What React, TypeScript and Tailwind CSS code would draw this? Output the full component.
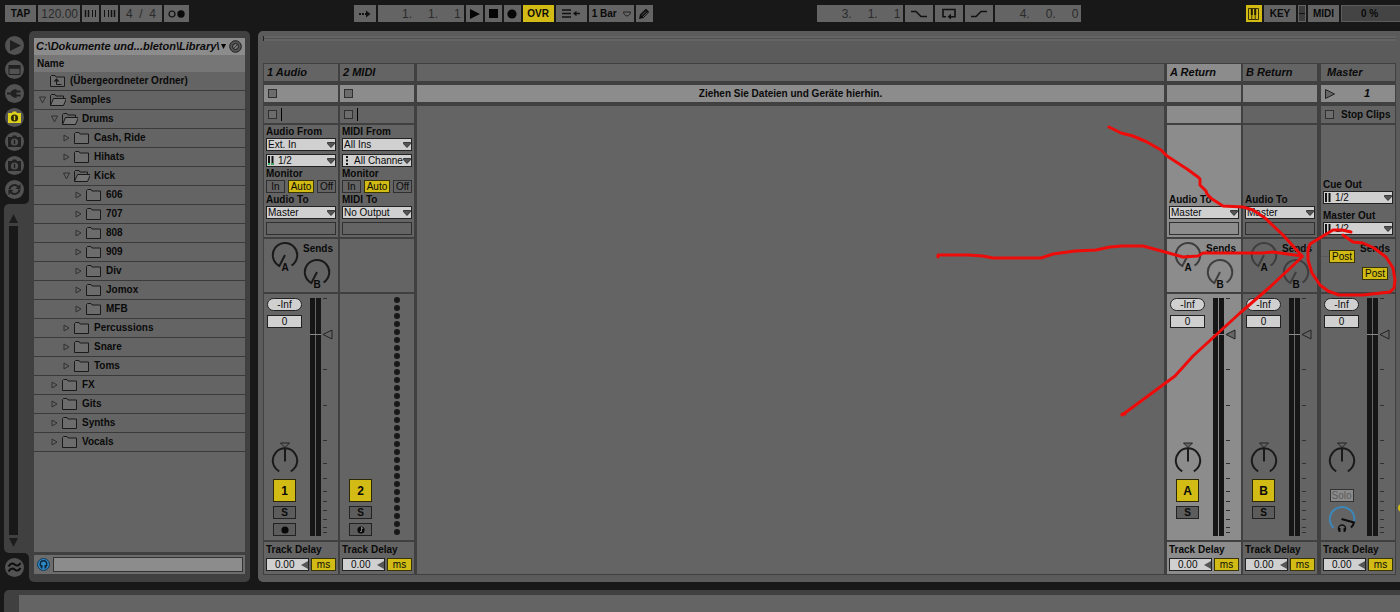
import type { ReactNode } from "react"

/* ---------- data ---------- */

type Node = { name: string; level: 0 | 1 | 2 | 3; state: "open" | "closed" | "parent" }

const tree: Node[] = [
  { name: "(Übergeordneter Ordner)", level: 0, state: "parent" },
  { name: "Samples", level: 0, state: "open" },
  { name: "Drums", level: 1, state: "open" },
  { name: "Cash, Ride", level: 2, state: "closed" },
  { name: "Hihats", level: 2, state: "closed" },
  { name: "Kick", level: 2, state: "open" },
  { name: "606", level: 3, state: "closed" },
  { name: "707", level: 3, state: "closed" },
  { name: "808", level: 3, state: "closed" },
  { name: "909", level: 3, state: "closed" },
  { name: "Div", level: 3, state: "closed" },
  { name: "Jomox", level: 3, state: "closed" },
  { name: "MFB", level: 3, state: "closed" },
  { name: "Percussions", level: 2, state: "closed" },
  { name: "Snare", level: 2, state: "closed" },
  { name: "Toms", level: 2, state: "closed" },
  { name: "FX", level: 1, state: "closed" },
  { name: "Gits", level: 1, state: "closed" },
  { name: "Synths", level: 1, state: "closed" },
  { name: "Vocals", level: 1, state: "closed" },
]

const indents = ["pl-[5px]", "pl-[17px]", "pl-[29px]", "pl-[41px]"]

const ticks = [0, 71, 107, 142, 165, 180, 193, 203, 212, 221, 229, 234]

/* ---------- transport bar ---------- */

function BarButton({ label, className, children }: { label: string; className: string; children: ReactNode }) {
  return (
    <button
      aria-label={label}
      className={`flex h-[17px] shrink-0 items-center justify-center text-[10px] font-bold leading-none ${className}`}
    >
      {children}
    </button>
  )
}

function Position({ label, values }: { label: string; values: string[] }) {
  return (
    <div
      role="group"
      aria-label={label}
      className="flex h-[17px] w-[86px] items-center justify-end bg-[#646464] pr-[3px] text-[12px] leading-none text-[#2a2a2a]"
    >
      <span className="w-[26px]">{values[0]}.</span>
      <span className="w-[26px]">{values[1]}.</span>
      <span>{values[2]}</span>
    </div>
  )
}

function TransportBar() {
  return (
    <header className="flex h-[31px] shrink-0 justify-between pl-[5px] pt-[5px]">
      <div className="flex gap-[2px]">
        <BarButton label="Tap tempo" className="w-[31px] bg-[#646464]">TAP</BarButton>
        <input
          aria-label="Tempo"
          defaultValue="120.00"
          className="h-[17px] w-[42px] bg-[#646464] pr-[2px] text-right text-[12px] leading-none text-[#2a2a2a] outline-none"
        />
        <BarButton label="Nudge down" className="w-[17px] bg-[#646464]">
          <svg width="13" height="9" viewBox="0 0 13 9" stroke="#111">
            <path d="M1.500 1v7M4.500 1v7" strokeWidth="1.500" />
            <path d="M8.500 1v7M11.500 1v7" />
          </svg>
        </BarButton>
        <BarButton label="Nudge up" className="w-[17px] bg-[#646464]">
          <svg width="13" height="9" viewBox="0 0 13 9" stroke="#111">
            <path d="M1.500 1v7M5.500 1v7" />
            <path d="M8.500 1v7M11.500 1v7" strokeWidth="1.500" />
          </svg>
        </BarButton>
        <div className="flex h-[17px] w-[42px] items-center justify-between bg-[#646464] px-[6px] text-[12px] leading-none text-[#2a2a2a]">
          <span>4</span>
          <span>/</span>
          <span>4</span>
        </div>
        <BarButton label="Metronome" className="w-[25px] bg-[#646464]">
          <svg width="17" height="8" viewBox="0 0 17 8">
            <circle cx="4" cy="4" r="3" fill="none" stroke="#0a0a0a" strokeWidth="1.2" />
            <circle cx="13" cy="4" r="3.7" fill="#0a0a0a" />
          </svg>
        </BarButton>
      </div>

      <div className="flex gap-[2px]">
        <BarButton label="Follow" className="w-[22px] bg-[#646464]">
          <svg width="13" height="8" viewBox="0 0 13 8" fill="#111">
            <path d="M1 3h2v2H1zM4 3h2v2H4zM7 3h1.500v2H7zM8 .5L12.500 4 8 7.500z" />
          </svg>
        </BarButton>
        <Position label="Arrangement position" values={["1", "1", "1"]} />
        <BarButton label="Play" className="w-[17px] bg-[#646464]">
          <svg width="11" height="10" viewBox="0 0 11 10"><path d="M1 0l10 5-10 5z" fill="#050505" /></svg>
        </BarButton>
        <BarButton label="Stop" className="w-[17px] bg-[#646464]">
          <svg width="9" height="9"><path d="M0 0h9v9H0z" fill="#050505" /></svg>
        </BarButton>
        <BarButton label="Record" className="w-[17px] bg-[#646464]">
          <svg width="10" height="10"><circle cx="5" cy="5" r="4.600" fill="#050505" /></svg>
        </BarButton>
        <BarButton label="Overdub" className="w-[31px] bg-[#d1bb14]">OVR</BarButton>
        <BarButton label="Back to arrangement" className="w-[31px] bg-[#646464]">
          <svg width="18" height="9" viewBox="0 0 18 9" stroke="#111" strokeWidth="1.5" fill="#111">
            <path d="M0 1h9M0 4.500h9M0 8h9" />
            <path d="M12 4.500h6" />
            <path d="M14.500 1.800v5.400L11 4.500z" stroke="none" />
          </svg>
        </BarButton>
        <BarButton label="Quantization" className="w-[45px] gap-[6px] bg-[#646464]">
          1 Bar
          <svg width="8" height="6" viewBox="0 0 8 6"><path d="M.5 1h7c0 2-2 4-3.500 4S.5 3 .5 1z" fill="none" stroke="#222" /></svg>
        </BarButton>
        <BarButton label="Draw mode" className="w-[17px] bg-[#646464]">
          <svg width="12" height="12" viewBox="0 0 12 12">
            <path d="M1 11l1-4.500L8 .8l3.200 3.200L5.500 10z" fill="#0c0c0c" />
            <path d="M3.800 7.500L8 3.300M5 9l4.500-4.500" stroke="#777" strokeWidth=".7" />
          </svg>
        </BarButton>
      </div>

      <div className="flex gap-[2px]">
        <Position label="Loop start" values={["3", "1", "1"]} />
        <BarButton label="Punch in" className="w-[28px] bg-[#646464]">
          <svg width="16" height="8" viewBox="0 0 16 8"><path d="M0 1.500h5l5 5h6" fill="none" stroke="#111" strokeWidth="1.5" /></svg>
        </BarButton>
        <BarButton label="Loop" className="w-[28px] bg-[#646464]">
          <svg width="14" height="12" viewBox="0 0 14 12">
            <path d="M4 8.700H1V1.500h12v7.200H9" fill="none" stroke="#111" strokeWidth="1.600" />
            <path d="M5.500 8.700L9 5.800v5.800z" fill="#111" />
          </svg>
        </BarButton>
        <BarButton label="Punch out" className="w-[28px] bg-[#646464]">
          <svg width="16" height="8" viewBox="0 0 16 8"><path d="M0 6.500h5l5-5h6" fill="none" stroke="#111" strokeWidth="1.5" /></svg>
        </BarButton>
        <Position label="Loop length" values={["4", "0", "0"]} />
      </div>

      <div className="flex gap-[2px]">
        <BarButton label="Computer MIDI keyboard" className="w-[16px] bg-[#d1bb14]">
          <svg width="11" height="12" viewBox="0 0 11 12">
            <path d="M.5.5h10v11H.5z" fill="none" stroke="#3a3405" />
            <path d="M3.800 1v10M7.200 1v10" stroke="#3a3405" />
            <path d="M3.800 1v6M7.200 1v6" stroke="#221e00" strokeWidth="2" />
          </svg>
        </BarButton>
        <BarButton label="Key map" className="w-[32px] bg-[#646464]">KEY</BarButton>
        <div className="flex h-[17px] w-[8px] items-center border border-[#646464] bg-[#3c3c3c]">
          <span className="h-px w-full bg-[#111]" />
        </div>
        <BarButton label="MIDI map" className="w-[31px] bg-[#646464]">MIDI</BarButton>
        <div className="flex h-[17px] w-[59px] items-center border border-r-0 border-[#5c5c5c] bg-[#444] pl-[19px] text-[10px] font-bold leading-none">
          0 %
        </div>
      </div>
    </header>
  )
}

/* ---------- browser ---------- */

function RoundButton({ label, children }: { label: string; children: ReactNode }) {
  return (
    <button aria-label={label} className="flex size-[19px] items-center justify-center rounded-full bg-[#525252]">
      <svg width="15" height="15" viewBox="0 0 15 15" fill="#202020">{children}</svg>
    </button>
  )
}

function FolderBadge({ active }: { active?: boolean }) {
  return (
    <>
      <path d="M1 3h4l1-1.500h3L10 3h4v10H1z" fill={active ? "#ddd01c" : "#202020"} />
      <circle cx="7.500" cy="8" r="3.600" fill={active ? "#2c2a06" : "#525252"} />
      <path d="M6.800 5.800h1.400v4.400H6.800z" fill={active ? "#ddd01c" : "#202020"} />
    </>
  )
}

function Rail() {
  return (
    <nav aria-label="Browser views" className="flex w-[29px] shrink-0 flex-col bg-[#404040]">
      <div className="flex flex-col gap-[5px] rounded-br-[5px] bg-[#181818] py-[5px] pl-[5px]">
        <RoundButton label="Live devices"><path d="M3 2l11 5.500L3 13z" /></RoundButton>
        <RoundButton label="Plug-ins">
          <path d="M1.500 3h12v3.500h-12z" />
          <path d="M2 6h11v6.500H2z" fill="none" stroke="#202020" />
        </RoundButton>
        <RoundButton label="Plug-in devices">
          <path d="M0 6.500h4v2H0zM3.500 7.500C3.500 5 6 3.500 9.500 3v9C6 11.500 3.500 10 3.500 7.500zM9 4.500h4.500v2H9zM9 8.500h4.500v2H9z" />
        </RoundButton>
        <RoundButton label="File browser 1"><FolderBadge active /></RoundButton>
        <RoundButton label="File browser 2"><FolderBadge /></RoundButton>
        <RoundButton label="File browser 3"><FolderBadge /></RoundButton>
        <RoundButton label="Hot-swap">
          <path d="M2.500 7.500a5 5 0 0 1 8.500-3M12.500 7.500a5 5 0 0 1-8.500 3" fill="none" stroke="#202020" strokeWidth="2" />
          <path d="M13.500 2v5h-5zM1.500 13V8h5z" />
        </RoundButton>
      </div>
      <div className="flex min-h-0 flex-1 flex-col bg-[#181818] pl-[4px]">
        <div className="flex flex-1 flex-col items-start gap-[3px] rounded-l-[5px] bg-[#404040] pb-[6px] pl-[5px] pt-[10px]">
          <svg width="9" height="9"><path d="M4.500 0L9 9H0z" fill="#1c1c1c" /></svg>
          <div className="w-[9px] flex-1 bg-[#181818]" />
          <svg width="9" height="9"><path d="M0 0h9L4.500 9z" fill="#1c1c1c" /></svg>
        </div>
      </div>
      <div className="rounded-tr-[5px] bg-[#181818] py-[5px] pl-[5px]">
        <RoundButton label="Groove pool">
          <path
            d="M1.500 6.500C4 2 6.500 3.500 8 4.700s3.500 1.500 5.500-1.700M1.500 11.500C4 7 6.500 8.500 8 9.700s3.500 1.500 5.500-1.700"
            fill="none" stroke="#0c0c0c" strokeWidth="2"
          />
        </RoundButton>
      </div>
    </nav>
  )
}

function Folder({ state }: { state: Node["state"] }) {
  return (
    <svg width="16" height="12" viewBox="0 0 16 12" fill="none" stroke="#1a1a1a">
      {state === "open" ? (
        <>
          <path d="M.5 11.500V1.500L1.500.5h3.500l1 1.500h7.500v2" />
          <path d="M.5 11.500L3.500 4.500h13l-3 7z" fill="#747474" />
        </>
      ) : (
        <path d="M.5 11.500V1.500L1.500.5h3.500l1 1.500h8.500v9.500z" fill="#6c6c6c" />
      )}
      {state === "parent" && (
        <>
          <path d="M11.500 9.500h-5V6" />
          <path d="M3.500 6.500L6.500 3.200l3 3.300z" fill="#1a1a1a" stroke="none" />
        </>
      )}
    </svg>
  )
}

function Browser() {
  return (
    <section aria-label="Browser" className="flex w-[221px] shrink-0 flex-col rounded-[5px] bg-[#404040] px-[5px] pb-[8px] pt-[7px]">
      <div className="flex h-[17px] items-center bg-[#8c8c8c] pl-[2px] pr-[3px]">
        <span className="flex-1 whitespace-nowrap text-[11px] font-bold italic leading-none">C:\Dokumente und...bleton\Library\</span>
        <svg width="5" height="5"><path d="M0 0h5L2.500 5z" /></svg>
        <button aria-label="Preview" className="ml-[3px]">
          <svg width="13" height="13" viewBox="0 0 13 13" fill="none" stroke="#1c1c1c">
            <circle cx="6.500" cy="6.500" r="5.800" fill="#555" />
            <circle cx="6.500" cy="6.500" r="3" fill="#777" />
            <path d="M4.500 8.500l4-4" strokeWidth=".7" />
          </svg>
        </button>
      </div>
      <div className="flex h-[17px] items-center bg-[#767676] pl-[3px] text-[10px] font-bold leading-none">Name</div>
      <ul className="min-h-0 flex-1 overflow-hidden bg-[#646464]">
        {tree.map((node) => (
          <li
            key={node.name}
            className={`flex h-[19px] items-center border-b border-[#3a3a3a] text-[10px] font-bold leading-none ${indents[node.level]}`}
          >
            <svg width="7" height="8" viewBox="0 0 7 8" fill="none" stroke="#303030">
              {node.state === "open" && <path d="M.5 1h6L3.500 7z" />}
              {node.state === "closed" && <path d="M1 1l5 3-5 3z" />}
            </svg>
            <span className="ml-[4px] mr-[4px]"><Folder state={node.state} /></span>
            {node.name}
          </li>
        ))}
      </ul>
      <div className="mt-[3px] flex h-[19px] items-center bg-[#6c6c6c] pl-[3px] pr-[2px]">
        <button aria-label="Preview sounds">
          <svg width="13" height="13" viewBox="0 0 13 13" fill="none">
            <circle cx="6.500" cy="6.500" r="6" fill="#2f87c4" stroke="#123a58" />
            <path d="M3.300 8V6a3.200 3.200 0 0 1 6.400 0v2" stroke="#0d2638" strokeWidth="1.400" />
            <path d="M3 7h2.500v3.500H4zM10 7H7.500v3.500H9z" fill="#0d2638" />
          </svg>
        </button>
        <input
          aria-label="Preview file"
          className="ml-[3px] h-[15px] min-w-0 flex-1 border border-[#333] bg-[#8c8c8c] text-[10px] outline-none"
        />
      </div>
    </section>
  )
}

/* ---------- track parts ---------- */

function Label({ htmlFor, children }: { htmlFor?: string; children: ReactNode }) {
  return (
    <label htmlFor={htmlFor} className="block h-[13px] whitespace-nowrap text-[10px] font-bold leading-[13px]">
      {children}
    </label>
  )
}

function Chooser({ id, label, value, icon }: { id: string; label?: string; value: string; icon?: "audio" | "signal" | "midi" }) {
  return (
    <div className="relative h-[13px]">
      <select
        id={id}
        aria-label={label}
        className={`block h-[13px] w-[70px] appearance-none overflow-hidden border border-[#222] bg-[#d0d0d0] py-0 pr-[8px] text-[10px] leading-[11px] outline-none ${icon ? "pl-[11px]" : "pl-[1px]"}`}
      >
        <option>{value}</option>
      </select>
      {icon && (
        <svg className="pointer-events-none absolute left-[2px] top-[2px]" width="6" height="9" viewBox="0 0 6 9" fill="#111">
          {icon === "midi" ? (
            <path d="M2 0h2v2H2zM2 3.500h2v2H2zM2 7h2v2H2z" />
          ) : (
            <path d="M0 0h2v9H0zM3.500 0h2v9h-2z" />
          )}
          {icon === "signal" && <path d="M0 7h2v2H0zM3.500 7h2v2h-2z" fill="#2fb35c" />}
        </svg>
      )}
      <svg className="pointer-events-none absolute right-[1px] top-[4px]" width="8" height="6" viewBox="0 0 8 6">
        <path d="M.5.5h7v1.200L4 5.500.5 1.700z" fill="#555" stroke="#222" strokeWidth=".8" />
      </svg>
    </div>
  )
}

function Knob({ name, dim }: { name: string; dim?: boolean }) {
  return (
    <div className="flex w-[28px] flex-col items-center">
      <svg width="28" height="28" viewBox="0 0 28 28" fill="none" stroke={dim ? "#3e3e3e" : "#1a1a1a"} strokeWidth="2">
        <path d="M14 14L8.400 25A12.200 12.200 0 1 1 20.500 24.500" />
      </svg>
      <span className="-mt-[5px] text-[10px] font-bold leading-[8px]">{name}</span>
    </div>
  )
}

function Sends({ dim }: { dim?: boolean }) {
  return (
    <div className="flex gap-[4px] pl-[7px]">
      <div className="pt-[2px]"><Knob name="A" dim={dim} /></div>
      <div>
        <div className="h-[19px] text-[10px] font-bold leading-[19px]">Sends</div>
        <Knob name="B" dim={dim} />
      </div>
    </div>
  )
}

function PostButton() {
  return (
    <button className="block h-[13px] w-[26px] border border-[#3a3505] bg-[#d1bb14] text-[10px] leading-[11px]">Post</button>
  )
}

function MasterSends() {
  return (
    <div className="flex gap-[5px]">
      <div className="flex pt-[11px]">
        <span className="mt-[6px] h-px w-[8px] bg-[#595959]" />
        <PostButton />
      </div>
      <div className="flex flex-col items-center">
        <div className="h-[19px] text-[10px] font-bold leading-[19px]">Sends</div>
        <div className="mt-[9px]"><PostButton /></div>
      </div>
    </div>
  )
}

function PanKnob({ filled }: { filled?: boolean }) {
  return (
    <svg width="28" height="33" viewBox="0 0 28 33" fill="none" stroke="#1a1a1a">
      <path d="M9.500 1h9L14 5.500z" fill={filled ? "#666" : "none"} strokeWidth=".9" />
      <path d="M8.200 29.300A12.200 12.200 0 1 1 19.800 29.300M14 7v12.500" strokeWidth="2" />
    </svg>
  )
}

function Meter({ filled }: { filled?: boolean }) {
  return (
    <div className="relative flex w-[24px] gap-px self-stretch">
      <div className="w-[5px] bg-[#161616]" />
      <div className="w-[5px] bg-[#161616]" />
      <svg className="absolute left-0 top-0" width="24" height="238" viewBox="0 0 24 238">
        {ticks.map((y) => (
          <path key={y} d={`M13 ${y + 0.5}h4`} stroke="#303030" />
        ))}
        <path d="M0 36.500h11" stroke="#8a8a8a" />
        <path d="M22 32v9l-9-4.500z" fill={filled ? "#666" : "#646464"} stroke="#222" />
      </svg>
    </div>
  )
}

function Levels({ name }: { name: string }) {
  return (
    <>
      <output aria-label={`${name} peak`} className="h-[13px] w-[35px] rounded-full border border-[#222] bg-[#d0d0d0] text-center text-[10px] leading-[11px]">-Inf</output>
      <input
        aria-label={`${name} volume`}
        defaultValue="0"
        className="mt-[4px] h-[13px] w-[35px] border border-[#222] bg-[#d0d0d0] text-center text-[10px] leading-[11px] outline-none"
      />
    </>
  )
}

function Switches({ name, badge, arm }: { name: string; badge: string; arm?: "audio" | "midi" }) {
  return (
    <>
      <button aria-label={`${name} on`} className="size-[23px] shrink-0 border border-[#2c2806] bg-[#d1bb14] text-[12px] font-bold leading-none">
        {badge}
      </button>
      <button aria-label={`Solo ${name}`} className="mt-[4px] h-[13px] w-[23px] shrink-0 border border-[#222] bg-[#5c5c5c] text-[10px] font-bold leading-[11px]">S</button>
      {arm ? (
        <button aria-label={`Arm ${name}`} className="mt-[4px] flex h-[13px] w-[23px] shrink-0 items-center justify-center border border-[#222] bg-[#5c5c5c]">
          <svg width="8" height="8" viewBox="0 0 8 8">
            <circle cx="4" cy="4" r="3.600" fill="#080808" />
            {arm === "midi" && <path d="M4.500 1v4.500H3M4.500 1l1.500 2" stroke="#888" fill="none" strokeWidth=".9" />}
          </svg>
        </button>
      ) : (
        <div className="mt-[4px] h-[13px]" />
      )}
    </>
  )
}

function TrackDelay({ id }: { id: string }) {
  return (
    <>
      <label htmlFor={id} className="block h-[16px] whitespace-nowrap text-[10px] font-bold leading-[16px]">Track Delay</label>
      <div className="flex gap-[2px]">
        <div className="flex h-[13px] w-[43px] items-center border border-[#222] bg-[#d0d0d0]">
          <input id={id} defaultValue="0.00" className="h-[11px] w-[34px] pl-[8px] text-[10px] leading-[11px] outline-none" />
          <svg width="7" height="8"><path d="M7 0v8L0 4z" fill="#555" /></svg>
        </div>
        <button className="h-[13px] w-[25px] border border-[#3a3505] bg-[#d1bb14] text-[10px] leading-[11px]">ms</button>
      </div>
    </>
  )
}

type TrackProps = {
  title: string
  tone?: string
  indent?: string
  slot?: ReactNode
  stop?: ReactNode
  io: ReactNode
  sends?: ReactNode
  mixer: ReactNode
}

function Track({ title, tone = "bg-[#646464]", indent = "pl-[3px]", slot, stop, io, sends, mixer }: TrackProps) {
  return (
    <article aria-label={title} className="flex w-[74px] shrink-0 flex-col overflow-hidden">
      <h2 className={`h-[17px] text-[11px] font-bold italic leading-[17px] ${indent} ${tone}`}>{title}</h2>
      <div className="mt-[4px] flex h-[17px] items-center bg-[#8c8c8c] pl-[4px]">{slot}</div>
      <div className={`mt-[4px] flex h-[17px] items-center pl-[4px] ${tone}`}>{stop}</div>
      <div className={`mt-[2px] flex h-[112px] flex-col justify-end px-[2px] pb-[2px] ${tone}`}>{io}</div>
      <div className={`mt-[2px] h-[53px] ${tone}`}>{sends}</div>
      <div className={`mt-[2px] flex min-h-[246px] flex-1 py-[4px] pl-[3px] ${tone}`}>{mixer}</div>
      <div className={`mt-[2px] h-[32px] px-[2px] ${tone}`}><TrackDelay id={`${title}-delay`} /></div>
    </article>
  )
}

function Square({ label }: { label: string }) {
  return <button aria-label={label} className="size-[9px] border border-[#303030] bg-[#6c6c6c]" />
}

function Monitor({ name }: { name: string }) {
  return (
    <>
      <div className="h-[13px] text-[10px] font-bold leading-[13px]">Monitor</div>
      <div role="group" aria-label={`${name} monitor`} className="flex gap-[3px] text-[10px] leading-[11px]">
        <button className="h-[13px] w-[19px] border border-[#303030]">In</button>
        <button className="h-[13px] w-[26px] border border-[#3a3505] bg-[#d1bb14]">Auto</button>
        <button className="h-[13px] w-[19px] border border-[#303030]">Off</button>
      </div>
    </>
  )
}

function SourceTrack({ title, kind, badge }: { title: string; kind: "Audio" | "MIDI"; badge: string }) {
  const audio = kind === "Audio"
  return (
    <Track
      title={title}
      slot={<Square label={`${title} clip slot`} />}
      stop={
        <>
          <Square label={`Stop ${title}`} />
          <span className="ml-[4px] h-[13px] w-px bg-black" />
        </>
      }
      io={
        <>
          <Label htmlFor={`${kind}-from`}>{kind} From</Label>
          <Chooser id={`${kind}-from`} value={audio ? "Ext. In" : "All Ins"} />
          <div className="mt-[3px]">
            <Chooser
              id={`${kind}-channel`}
              label={`${kind} input channel`}
              value={audio ? "1/2" : "All Channels"}
              icon={audio ? "signal" : "midi"}
            />
          </div>
          <Monitor name={title} />
          <Label htmlFor={`${kind}-to`}>{kind} To</Label>
          <Chooser id={`${kind}-to`} value={audio ? "Master" : "No Output"} />
          <div className="mt-[3px] h-[13px] border border-[#303030]" />
        </>
      }
      sends={audio && <Sends />}
      mixer={
        <>
          <div className="flex w-[35px] flex-col items-center">
            {audio && <Levels name={title} />}
            <div className="flex-1" />
            {audio && <div className="mb-[4px]"><PanKnob /></div>}
            <Switches name={title} badge={badge} arm={audio ? "audio" : "midi"} />
          </div>
          {audio ? (
            <div className="ml-[8px] flex"><Meter /></div>
          ) : (
            <div className="-mt-px ml-[16px] flex flex-col gap-[2px]">
              {Array.from({ length: 30 }, (_, i) => (
                <span key={i} className="size-[6px] rounded-full bg-[#181818]" />
              ))}
            </div>
          )}
        </>
      }
    />
  )
}

function ReturnTrack({ letter, selected }: { letter: string; selected?: boolean }) {
  const title = `${letter} Return`
  return (
    <Track
      title={title}
      tone={selected ? "bg-[#8c8c8c]" : "bg-[#646464]"}
      io={
        <>
          <Label htmlFor={`${letter}-to`}>Audio To</Label>
          <Chooser id={`${letter}-to`} value="Master" />
          <div className="mt-[3px] h-[13px] border border-[#303030]" />
        </>
      }
      sends={<Sends dim />}
      mixer={
        <>
          <div className="flex w-[35px] flex-col items-center">
            <Levels name={title} />
            <div className="flex-1" />
            <div className="mb-[4px]"><PanKnob filled={selected} /></div>
            <Switches name={title} badge={letter} />
          </div>
          <div className="ml-[8px] flex"><Meter filled={selected} /></div>
        </>
      }
    />
  )
}

function MasterTrack() {
  return (
    <Track
      title="Master"
      indent="pl-[6px]"
      slot={
        <button aria-label="Launch scene 1" className="flex flex-1 items-center text-[11px] font-bold italic leading-none">
          <svg width="10" height="10"><path d="M.5.5L9.500 5 .5 9.500z" fill="#666" stroke="#222" /></svg>
          <span className="ml-[29px]">1</span>
        </button>
      }
      stop={
        <>
          <Square label="Stop all clips" />
          <span className="ml-[7px] whitespace-nowrap text-[10px] font-bold leading-none">Stop Clips</span>
        </>
      }
      io={
        <>
          <Label htmlFor="cue-out">Cue Out</Label>
          <Chooser id="cue-out" value="1/2" icon="audio" />
          <div className="mt-[5px]"><Label htmlFor="master-out">Master Out</Label></div>
          <Chooser id="master-out" value="1/2" icon="audio" />
        </>
      }
      sends={<MasterSends />}
      mixer={
        <>
          <div className="flex w-[35px] flex-col items-center">
            <Levels name="Master" />
            <div className="flex-1" />
            <PanKnob />
            <button className="mt-[14px] h-[13px] w-[24px] shrink-0 border border-[#333] bg-[#8a8a8a] text-[10px] leading-[11px] text-[#5c5c5c]">Solo</button>
            <svg className="mt-[3px] shrink-0" width="28" height="31" viewBox="0 0 28 31" fill="none">
              <path d="M5.700 23A12.200 12.200 0 1 1 26 17" stroke="#3c86b8" strokeWidth="2" />
              <path d="M13.500 14l12.500 3.500c-.5 2-1.500 3.500-3 5" stroke="#0e0e0e" strokeWidth="2" />
              <path d="M11.500 26.500c-3-5 1-6.500 2.500-6.500s5.500 1.500 2.500 6.500" stroke="#0e0e0e" strokeWidth="1.300" />
              <path d="M10 23h2.500v4H11zM18 23h-2.500v4H17z" fill="#0e0e0e" />
            </svg>
          </div>
          <div className="ml-[8px] flex"><Meter /></div>
        </>
      }
    />
  )
}

function DropArea() {
  return (
    <div className="flex min-w-0 flex-1 flex-col">
      <div className="h-[17px] bg-[#646464]" />
      <div className="mt-[4px] h-[17px] bg-[#8c8c8c] text-center text-[10px] font-bold leading-[17px]">
        Ziehen Sie Dateien und Geräte hierhin.
      </div>
      <div className="mt-[4px] flex-1 bg-[#646464]" />
    </div>
  )
}

function Session() {
  return (
    <main className="flex min-w-0 flex-1 flex-col rounded-l-[5px] bg-[#5b5b5b] pb-[7px] pl-[5px] pr-[4px] pt-[5px]">
      <div className="mb-[22px] flex h-[5px] flex-col justify-center border-l border-[#222] bg-[#646464]">
        <div className="h-px bg-[#505050]" />
      </div>
      <div className="flex flex-1 bg-[#404040] p-px">
        <SourceTrack title="1 Audio" kind="Audio" badge="1" />
        <div className="w-[2px]" />
        <SourceTrack title="2 MIDI" kind="MIDI" badge="2" />
        <div className="w-[3px]" />
        <DropArea />
        <div className="w-[3px]" />
        <ReturnTrack letter="A" selected />
        <div className="w-[2px]" />
        <ReturnTrack letter="B" />
        <div className="w-[4px]" />
        <MasterTrack />
      </div>
    </main>
  )
}

/* Freehand red marker: three lines meeting at the sends, and the ring round the Post buttons. */
function Marker() {
  return (
    <svg
      aria-hidden="true"
      className="pointer-events-none absolute right-0 top-0"
      width="480" height="440" viewBox="920 0 480 440"
      fill="none" stroke="#ee0c0a" strokeWidth="3" strokeLinecap="round" strokeLinejoin="round"
    >
      <path d="M1109 127L1121 133 1133 136 1147 142 1161 150 1167 156 1187 169 1198 177 1200 179 1200 185 1206 191 1207 194 1212 199 1223 206 1243 207 1253 210 1265 218 1283 235 1302 256" />
      <path d="M938 257L938 255 968 255 983 256 993 258 1041 258 1053 254 1075 251 1096 250 1110 247 1122 246 1143 246 1165 252 1183 257 1198 256 1203 253 1263 253 1273 252 1302 256" />
      <path d="M1122 415L1133 407 1175 376 1193 356 1240 313 1270 287 1302 257M1122 414L1125 414" />
      <path d="M1351 232L1342 230 1333 230 1323 236 1310 244 1308 250 1308 260 1312 273 1320 285 1328 291 1339 295 1363 295 1390 292 1394 288 1395 280 1393 268 1386 257 1374 248 1363 243 1353 242 1343 235" />
    </svg>
  )
}

export default function App() {
  return (
    <div className="relative flex min-h-screen flex-col overflow-hidden bg-[#181818] font-['Liberation_Sans',Arial,sans-serif] text-[#0a0a0a]">
      <TransportBar />
      <div className="flex flex-1">
        <Rail />
        <Browser />
        <div className="w-[8px] shrink-0" />
        <Session />
      </div>
      <footer className="mt-[8px] flex h-[22px] pl-[4px]">
        <div className="flex-1 rounded-tl-[5px] bg-[#404040] pl-[15px] pt-[5px]">
          <div className="h-full bg-[#646464]" />
        </div>
      </footer>
      <span className="absolute -right-[6px] top-[504px] size-[8px] rounded-full bg-[#d1bb14]" />
      <Marker />
    </div>
  )
}
